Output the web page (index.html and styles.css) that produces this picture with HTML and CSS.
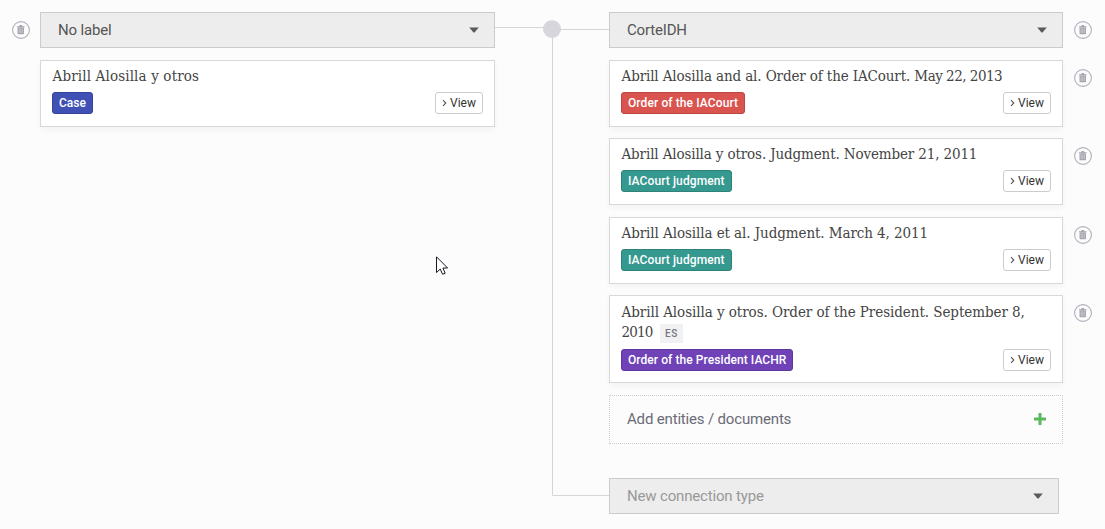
FILE: index.html
```
<!DOCTYPE html>
<html lang="en">
<head>
<meta charset="utf-8">
<title>Connections</title>
<link rel="stylesheet" href="styles.css">
</head>
<body>
<svg class="defs" width="0" height="0" aria-hidden="true">
  <symbol id="trash" viewBox="0 0 18 18">
    <circle cx="9" cy="9" r="8.4" fill="none" stroke="#b0b0bc" stroke-width="1.100"/>
    <path d="M4.900 6.200V5.200h2.200l.5-1.100h2.300l.5 1.100h2.200v1zM5.500 6.400h6.500v6.100q0 .8-.8.8H6.300q-.8 0-.8-.8z" fill="#a6a6b1"/>
    <path d="M7.200 7.500v4.500M8.750 7.500v4.500M10.300 7.500v4.500" stroke="#d8d8de" stroke-width=".6"/>
  </symbol>
  <symbol id="caret" viewBox="0 0 10 6"><path d="M.2.5h9.600L5.500 5.500h-1z" fill="#5a5a5a"/></symbol>
  <symbol id="chevron" viewBox="0 0 5 8"><path d="M1 1.200 3.800 4 1 6.800" fill="none" stroke="#555" stroke-width="1.100"/></symbol>
</svg>
<main class="board">
  <div class="side-left"><svg class="trash"><use href="#trash"/></svg></div>
  <section class="column">
    <div class="select"><span>No label</span><svg class="caret"><use href="#caret"/></svg></div>
    <article class="card">
      <h2 class="title t-case">Abrill Alosilla y otros</h2>
      <div class="meta"><span class="tag blue">Case</span><button class="view"><svg class="chevron"><use href="#chevron"/></svg>View</button></div>
    </article>
  </section>
  <svg class="connector" viewBox="0 0 114 529">
    <path d="M0 27.500H57M57 29.500H114M57.500 29V495.500H114" fill="none" stroke="#d5d5da"/>
    <circle cx="57" cy="29" r="9" fill="#d6d6dc"/>
  </svg>
  <section class="column">
    <div class="row"><div class="select"><span>CorteIDH</span><svg class="caret"><use href="#caret"/></svg></div><svg class="trash"><use href="#trash"/></svg></div>
    <div class="row">
      <article class="card">
        <h2 class="title t-order">Abrill Alosilla and al. Order of the IACourt. <span class="date-may">May 22, 2013</span></h2>
        <div class="meta"><span class="tag red">Order of the IACourt</span><button class="view"><svg class="chevron"><use href="#chevron"/></svg>View</button></div>
      </article>
      <svg class="trash"><use href="#trash"/></svg>
    </div>
    <div class="row">
      <article class="card">
        <h2 class="title t-november">Abrill Alosilla y otros. Judgment. November 21, 2011</h2>
        <div class="meta"><span class="tag teal">IACourt judgment</span><button class="view"><svg class="chevron"><use href="#chevron"/></svg>View</button></div>
      </article>
      <svg class="trash"><use href="#trash"/></svg>
    </div>
    <div class="row">
      <article class="card">
        <h2 class="title t-march">Abrill Alosilla et al. Judgment. March 4, 2011</h2>
        <div class="meta"><span class="tag teal">IACourt judgment</span><button class="view"><svg class="chevron"><use href="#chevron"/></svg>View</button></div>
      </article>
      <svg class="trash"><use href="#trash"/></svg>
    </div>
    <div class="row">
      <article class="card tall">
        <h2 class="title t-president">Abrill Alosilla y otros. Order of the President. September 8,<br><span class="year">2010</span> <span class="lang">ES</span></h2>
        <div class="meta"><span class="tag purple">Order of the President IACHR</span><button class="view"><svg class="chevron"><use href="#chevron"/></svg>View</button></div>
      </article>
      <svg class="trash"><use href="#trash"/></svg>
    </div>
    <div class="add"><span>Add entities / documents</span><svg class="plus" viewBox="0 0 12 12"><path d="M4.500 0h3v4.500H12v3H7.500V12h-3V7.500H0v-3h4.500z" fill="#5cb85c"/></svg></div>
    <div class="select new-type"><span>New connection type</span><svg class="caret"><use href="#caret"/></svg></div>
  </section>
</main>
<svg class="cursor" viewBox="0 0 12 19"><path d="M.5.8V16.600L4.200 13 6.600 18.300 9.200 17.200 6.900 12H11.600z" fill="#fff" stroke="#171723"/></svg>
</body>
</html>
```
FILE: styles.css
```
* { box-sizing: border-box; }
body { margin: 0; height: 529px; overflow: hidden; background: #fcfcfc; color: #444; font-family: Roboto, sans-serif; font-size: 15px; letter-spacing: -.17px; }
.defs { display: block; }
.board { display: grid; grid-template-columns: 40px 455px 114px 454px; height: 529px; }
.side-left { padding: 21px 0 0 12px; }
.column { padding-top: 12px; }
.connector { display: block; width: 114px; height: 529px; }
.trash { display: block; flex: none; width: 18px; height: 18px; }
.row { display: flex; gap: 11px; width: 483px; }
.row > .select, .row > .card { flex: none; width: 454px; }
.row > .trash { margin-top: 9px; }
.row + .row, .column > .card { margin-top: 12px; }
.row + .row + .row { margin-top: 11.4px; }
.select { display: flex; align-items: center; justify-content: space-between; height: 36px; padding: 0 15px 0 17px; border: 1px solid #ccc; background: #ededed; color: #555; }
.caret { width: 10px; height: 6px; }
.card { height: 67px; padding: 5px 11px 0; border: 1px solid #d8d8db; background: #fff; box-shadow: 0 3px 6px rgba(0, 0, 0, .04); }
.card.tall { height: 88px; }
.title { margin: 0 0 6px; padding-left: .5px; font: 400 15px/20px "Roboto Slab", "DejaVu Serif Condensed", "DejaVu Serif", serif; font-stretch: condensed; color: #444; white-space: nowrap; }
.t-case { letter-spacing: .14px; }
.t-order { letter-spacing: -.12px; }
.date-may { letter-spacing: -.5px; }
.t-november { letter-spacing: -.13px; }
.t-march { letter-spacing: -.08px; }
.t-president { letter-spacing: -.06px; }
.year { letter-spacing: -.8px; }
.lang { display: inline-block; height: 19px; margin-left: 3px; padding: 0 5px; background: #f1f1f4; color: #777783; font: 500 10px/19px Roboto, sans-serif; letter-spacing: .7px; vertical-align: top; margin-top: 2px; }
.tall .title { height: 41px; padding-top: 1px; margin-bottom: 6px; }
.meta { display: flex; justify-content: space-between; height: 22px; }
.tag { height: 22px; padding: 0 6px; border: 1px solid; border-radius: 3px; color: #fff; font-size: 12px; font-weight: 500; line-height: 20px; letter-spacing: .1px; white-space: nowrap; }
.blue { background: #3f51b5; border-color: #35449a; letter-spacing: 0; }
.red { background: #d9534f; border-color: #b94743; }
.teal { background: #359990; border-color: #2d827a; }
.purple { background: #6f42b8; border-color: #5e389c; letter-spacing: .07px; }
.view { display: flex; align-items: center; gap: 3px; width: 48px; height: 22px; padding: 0 0 0 6px; border: 1px solid #ccc; border-radius: 3px; background: #fff; color: #333; font: 400 12px/20px Roboto, sans-serif; letter-spacing: 0; }
.tall .meta { padding-top: .6px; height: 22.6px; }
.chevron { width: 5px; height: 8px; }
.add { display: flex; align-items: center; justify-content: space-between; height: 49px; margin-top: 12px; padding: 0 16px 2px 17px; border: 1px dotted #ccc; color: #6b6b78; }
.plus { width: 12px; height: 12px; }
.new-type { width: 450px; margin-top: 34px; color: #999; }
.cursor { position: absolute; left: 436px; top: 256px; width: 12px; height: 19px; }
```
